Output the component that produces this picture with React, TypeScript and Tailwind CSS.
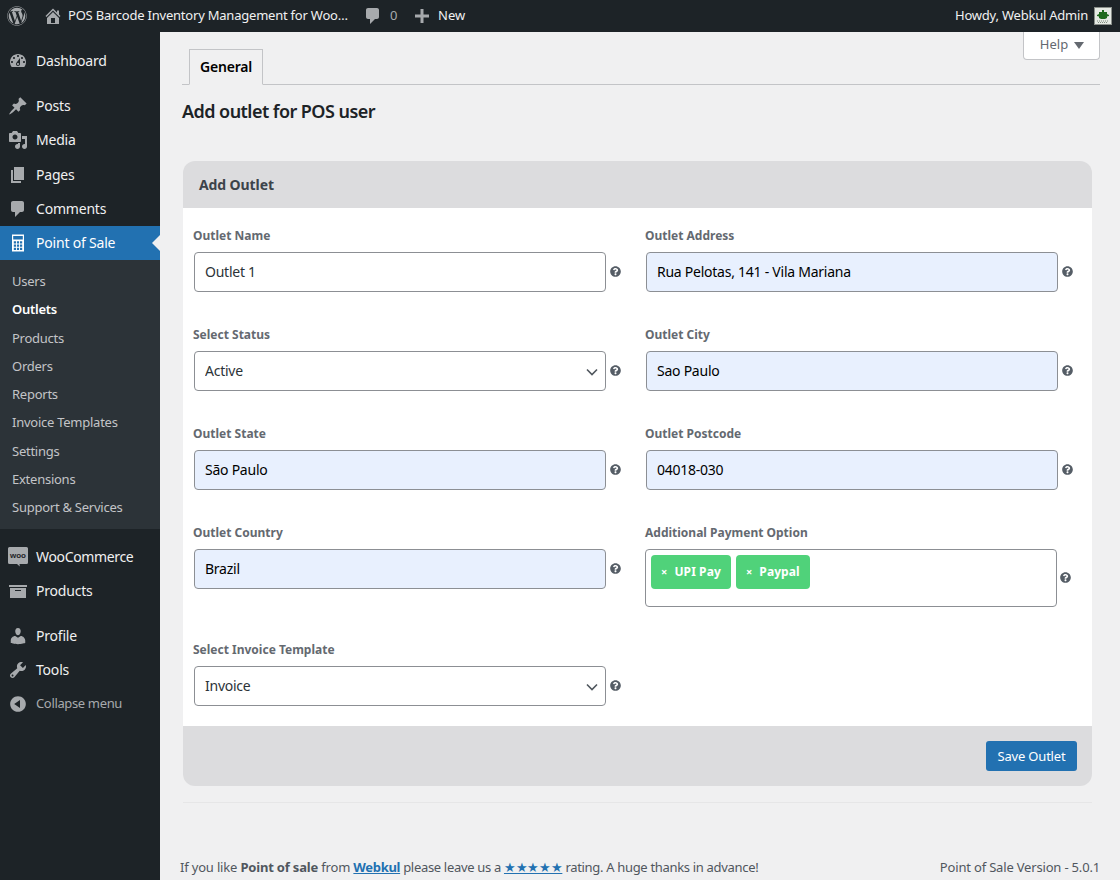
import React from "react";
import { FaWordpress, FaQuestionCircle } from "react-icons/fa";

const P: Record<string, string> = {
  dashboard: "M3.76 16h12.48c1.1-1.37 1.76-3.11 1.76-5 0-4.42-3.58-8-8-8s-8 3.58-8 8c0 1.89.66 3.63 1.76 5zM10 4c.55 0 1 .45 1 1s-.45 1-1 1-1-.45-1-1 .45-1 1-1zM6 6c.55 0 1 .45 1 1s-.45 1-1 1-1-.45-1-1 .45-1 1-1zm8 0c.55 0 1 .45 1 1s-.45 1-1 1-1-.45-1-1 .45-1 1-1zm-5.37 5.55L12 7v6c0 1.1-.9 2-2 2s-2-.9-2-2c0-.57.24-1.08.63-1.45zM4 10c.55 0 1 .45 1 1s-.45 1-1 1-1-.45-1-1 .45-1 1-1zm12 0c.55 0 1 .45 1 1s-.45 1-1 1-1-.45-1-1 .45-1 1-1zm-5 3c0-.55-.45-1-1-1s-1 .45-1 1 .45 1 1 1 1-.45 1-1z",
  post: "M10.44 3.02l1.82-1.82 6.36 6.35-1.83 1.82c-1.05-.68-2.48-.57-3.41.36l-.75.75c-.92.93-1.04 2.35-.35 3.41l-1.83 1.82-2.41-2.41-2.8 2.79c-.42.42-3.38 2.71-3.8 2.29s1.86-3.39 2.28-3.81l2.79-2.79L4.1 9.36l1.83-1.82c1.05.69 2.48.57 3.4-.36l.75-.75c.93-.92 1.05-2.35.36-3.41z",
  media: "M13 11V4c0-.55-.45-1-1-1h-1.67L9 1H5L3.67 3H2c-.55 0-1 .45-1 1v7c0 .55.45 1 1 1h10c.55 0 1-.45 1-1zM7 4.5c1.38 0 2.5 1.12 2.5 2.5S8.38 9.5 7 9.5 4.5 8.38 4.5 7 5.62 4.5 7 4.5zM14 6h5v10.5c0 1.38-1.12 2.5-2.5 2.5S14 17.88 14 16.5s1.12-2.5 2.5-2.5c.17 0 .34.02.5.05V9h-3V6zm-4 8.05V13h2v3.5c0 1.38-1.12 2.5-2.5 2.5S7 17.88 7 16.5 8.12 14 9.5 14c.17 0 .34.02.5.05z",
  page: "M6 15V2h10v13H6zm-1 1h8v2H3V5h2v11z",
  comment: "M5 2h9c1.1 0 2 .9 2 2v7c0 1.1-.9 2-2 2h-2l-5 5v-5H5c-1.1 0-2-.9-2-2V4c0-1.1.9-2 2-2z",
  archive: "M19 4v2H1V4h18zM2 7h16v10H2V7zm11 3V9H7v1h6z",
  user: "M10 9.25c-2.27 0-2.73-3.44-2.73-3.44C7 4.02 7.82 2 9.97 2c2.16 0 2.98 2.02 2.71 3.81 0 0-.41 3.44-2.68 3.44zm0 2.57L12.72 10c2.39 0 4.52 2.33 4.52 4.53v2.49s-3.65 1.13-7.24 1.13c-3.65 0-7.24-1.13-7.24-1.13v-2.49c0-2.25 1.94-4.48 4.47-4.48z",
  tools: "M16.68 9.77c-1.34 1.34-3.3 1.67-4.95.99l-5.41 6.52c-.99.99-2.59.99-3.58 0s-.99-2.59 0-3.57l6.52-5.42c-.68-1.65-.35-3.61.99-4.95 1.28-1.28 3.12-1.62 4.72-1.06l-2.89 2.89 2.82 2.82 2.86-2.87c.53 1.58.18 3.39-1.08 4.67zM3.81 16.21c.4.39 1.04.39 1.43 0 .4-.4.4-1.04 0-1.43-.39-.4-1.03-.4-1.43 0-.39.39-.39 1.03 0 1.43z",
  collapse: "M10 2.16c4.33 0 7.84 3.51 7.84 7.84s-3.51 7.84-7.84 7.84S2.16 14.33 2.16 10 5.71 2.16 10 2.16zm2 11.72V6.12L6.18 9.97z",
  home: "M16 8.5l1.53 1.53-1.06 1.06L10 4.62l-6.47 6.47-1.06-1.06L10 2.5l4 4v-2h2v4zm-6-2.46l6 5.99V18H4v-5.97zM12 17v-5H8v5h4z",
  plus: "M17 8.5v3h-5.5V17h-3v-5.5H3v-3h5.5V3h3v5.5H17z",
  calc: "M4 1.500h12V18.500H4V1.500zM5.200 3v3.500h9.600V3H5.200zM5.800 8.200v2.200h2.200V8.200H5.800zm3.100 0v2.200h2.200V8.200H8.900zm3.100 0v2.200h2.200V8.200H12zM5.800 11.500v2.200h2.200v-2.200H5.800zm3.100 0v2.200h2.200v-2.200H8.900zm3.100 0v2.200h2.200v-2.200H12zM5.800 14.800v2.200h2.200v-2.200H5.800zm3.100 0v2.200h2.200v-2.200H8.900zm3.100 0v2.200h2.200v-2.200H12z",
};

function Dash({ name, size = 20, className = "" }: { name: string; size?: number; className?: string }) {
  return (
    <svg viewBox="0 0 20 20" width={size} height={size} fill="currentColor" fillRule="evenodd" className={`shrink-0 ${className}`}>
      <path d={P[name]} />
    </svg>
  );
}

function WooIcon() {
  return (
    <svg viewBox="0 0 20 20" width="20" height="20">
      <path d="M1.500 0h17A1.500 1.500 0 0 1 20 1.500v14a1.500 1.500 0 0 1-1.500 1.500H11.500l.3 2.500L9 17H1.500A1.500 1.500 0 0 1 0 15.500v-14A1.500 1.500 0 0 1 1.500 0z" fill="#a7aaad" />
      <text x="10" y="11" textAnchor="middle" fontSize="8" fontWeight="700" fontFamily="Liberation Sans, sans-serif" fill="#1d2327">woo</text>
    </svg>
  );
}

function MenuItem({ icon, label, active, cls }: { icon: React.ReactNode; label: string; active?: boolean; cls?: string }) {
  return (
    <div className={`relative flex h-[34px] items-center text-sm ${cls ?? ""} ${active ? "bg-[#2271b1] text-white" : "text-[#f0f0f1]"}`}>
      <span className={`flex w-9 justify-center ${active ? "text-white" : "text-[#a7aaad]"}`}>{icon}</span>
      <span className={label === "WooCommerce" ? "tracking-[-0.35px]" : "tracking-[-0.2px]"}>{label}</span>
      {active && <span className="absolute right-0 top-[9px] border-y-8 border-r-8 border-y-transparent border-r-[#f0f0f1]" />}
    </div>
  );
}

const SUB = ["Users", "Outlets", "Products", "Orders", "Reports", "Invoice Templates", "Settings", "Extensions", "Support & Services"];

function Help({ cls = "ml-[4px]" }: { cls?: string }) {
  return <FaQuestionCircle className={`mb-[2px] shrink-0 text-[#555d66] ${cls}`} size={11} />;
}

function Label({ children }: { children: React.ReactNode }) {
  return <div className="h-5 text-xs font-bold leading-[22px] text-[#646970]">{children}</div>;
}

function Field({ label, value, filled, select }: { label: string; value: string; filled?: boolean; select?: boolean }) {
  return (
    <div>
      <Label>{label}</Label>
      <div className="mt-[7px] flex items-center pl-px">
        {select ? (
          <div className="relative w-[412px]">
            <select defaultValue={value} className="h-10 w-full appearance-none rounded border border-[#8c8f94] bg-white px-[10px] text-sm tracking-[-0.25px] text-[#2c3338]">
              <option>{value}</option>
            </select>
            <svg viewBox="0 0 12 8" width="12" height="8" className="pointer-events-none absolute right-[8px] top-[17px] text-[#50575e]" fill="none" stroke="currentColor" strokeWidth="1.600">
              <path d="M1 1.500l5 5 5-5" />
            </svg>
          </div>
        ) : (
          <input
            readOnly
            value={value}
            className={`h-10 w-[412px] rounded border border-[#8c8f94] px-[10px] pb-[2px] text-sm tracking-[-0.25px] ${filled ? "bg-[#e8f0fe] text-black" : "bg-white text-[#2c3338]"}`}
          />
        )}
        <Help />
      </div>
    </div>
  );
}

function Tag({ label }: { label: string }) {
  return (
    <span className="flex h-[34px] items-center gap-[7px] rounded bg-[#50d27a] px-[10px] text-xs font-bold tracking-[0.1px] text-white">
      <span className="text-[11px]">×</span>
      {label}
    </span>
  );
}

export default function App() {
  return (
    <div className="flex h-[880px] w-[1120px] flex-col overflow-hidden bg-[#f0f0f1] font-['Noto_Sans',sans-serif] text-[#3c434a]">
      <header className="flex h-8 shrink-0 items-center bg-[#1d2327] text-[13px] text-[#f0f0f1]">
        <FaWordpress size={20} className="ml-[7px] text-[#a7aaad]" />
        <Dash name="home" className="ml-[16px] text-[#a7aaad]" />
        <span className="ml-[5px] w-[281px] whitespace-nowrap tracking-[-0.22px]">POS Barcode Inventory Management for Woo…</span>
        <Dash name="comment" className="ml-[14px] text-[#a7aaad]" />
        <span className="ml-[7px] w-2 text-[#a7aaad]">0</span>
        <Dash name="plus" className="ml-[14px] text-[#a7aaad]" />
        <span className="ml-[6px]">New</span>
        <span className="ml-auto tracking-[-0.22px]">Howdy, Webkul Admin</span>
        <svg viewBox="0 0 18 18" width="18" height="18" className="ml-[6px] mr-[8px]">
          <rect width="18" height="18" fill="#e6eae4" />
          <rect x=".5" y=".5" width="17" height="17" fill="none" stroke="#8a8f8a" />
          <path d="M8 3h2v2h3v2l2 1v1l-2 .5V11l-2 1H7l-2-1V9.500L3 9V8l2-1V5h3z" fill="#1f6a1d" />
          <path d="M3 14h12M4 15.500h10" stroke="#7d8a7d" strokeWidth="1" strokeDasharray="1 1" />
        </svg>
      </header>

      <div className="flex min-h-0 flex-1">
        <aside className="w-40 shrink-0 bg-[#1d2327] pt-3">
          <MenuItem icon={<Dash name="dashboard" />} label="Dashboard" />
          <MenuItem icon={<Dash name="post" />} label="Posts" cls="mt-[11px]" />
          <MenuItem icon={<Dash name="media" />} label="Media" cls="mb-px" />
          <MenuItem icon={<Dash name="page" />} label="Pages" />
          <MenuItem icon={<Dash name="comment" />} label="Comments" />
          <MenuItem icon={<Dash name="calc" />} label="Point of Sale" active />
          <div className="flex h-[269px] flex-col justify-between bg-[#2c3338] pb-[9px] pt-[8px]">
            {SUB.map((s) => (
              <div key={s} className={`pl-3 text-[13px] leading-[26px] tracking-[-0.25px] ${s === "Outlets" ? "font-semibold text-white" : "text-[#c3c4c7]"}`}>
                {s}
              </div>
            ))}
          </div>
          <MenuItem icon={<WooIcon />} label="WooCommerce" cls="mt-[11px]" />
          <MenuItem icon={<Dash name="archive" />} label="Products" />
          <MenuItem icon={<Dash name="user" />} label="Profile" cls="mt-[11px]" />
          <MenuItem icon={<Dash name="tools" />} label="Tools" />
          <div className="flex h-[34px] items-center text-[13px] text-[#a7aaad]">
            <span className="flex w-9 justify-center"><Dash name="collapse" /></span>
            <span className="tracking-[-0.35px]">Collapse menu</span>
          </div>
        </aside>

        <main className="relative flex min-w-0 flex-1 flex-col pl-[22px] pr-5">
          <div className="absolute right-5 top-0 flex h-7 w-[77px] items-center justify-center gap-[6px] rounded-b border border-t-0 border-[#c3c4c7] bg-white pb-[2px] pl-px text-[13px] text-[#646970]">
            Help
            <span className="mt-px border-x-[5px] border-t-[7px] border-x-transparent border-t-[#646970]" />
          </div>

          <div className="flex h-[53px] items-end border-b border-[#c3c4c7] pl-[7px]">
            <div className="-mb-px flex h-9 w-[74px] items-center justify-center border border-[#c3c4c7] border-b-[#f0f0f1] bg-[#f0f0f1] text-sm font-semibold tracking-[-0.2px] text-black">
              General
            </div>
          </div>
          <h1 className="mt-[14px] h-6 text-lg font-semibold leading-6 tracking-[-0.55px] text-[#1d2327]">Add outlet for POS user</h1>

          <section className="ml-px mt-[38px] w-[909px]">
            <div className="flex h-[47px] items-center rounded-t-xl bg-[#dcdcde] pl-4 text-sm font-bold tracking-[-0.1px] text-[#3c434a]">Add Outlet</div>
            <div className="grid grid-cols-[452px_1fr] bg-white pb-5 pl-[10px] pt-[17px]">
              <div className="flex flex-col gap-8">
                <Field label="Outlet Name" value="Outlet 1" />
                <Field label="Select Status" value="Active" select />
                <Field label="Outlet State" value="São Paulo" filled />
                <Field label="Outlet Country" value="Brazil" filled />
                <div className="mt-[18px]">
                  <Field label="Select Invoice Template" value="Invoice" select />
                </div>
              </div>
              <div className="flex flex-col gap-8">
                <Field label="Outlet Address" value="Rua Pelotas, 141 - Vila Mariana" filled />
                <Field label="Outlet City" value="Sao Paulo" filled />
                <Field label="Outlet Postcode" value="04018-030" filled />
                <div>
                  <Label>Additional Payment Option</Label>
                  <div className="mt-[7px] flex items-center">
                    <div className="flex h-[58px] w-[412px] items-start gap-[5px] rounded border border-[#8c8f94] bg-white p-[5px]">
                      <Tag label="UPI Pay" />
                      <Tag label="Paypal" />
                    </div>
                    <Help cls="ml-[3px]" />
                  </div>
                </div>
              </div>
            </div>
            <div className="flex h-[60px] items-center justify-end rounded-b-xl bg-[#dcdcde] pr-[15px]">
              <button className="h-[30px] w-[91px] rounded-[3px] bg-[#2271b1] pt-[2px] text-[13px] tracking-[-0.2px] text-white">Save Outlet</button>
            </div>
          </section>
          <div className="ml-px mt-4 h-px w-[909px] bg-[#e6e6e7]" />

          <footer className="-ml-[2px] mt-auto flex h-[26px] items-start justify-between text-[13px] leading-[26px] text-[#50575e]">
            <span className="tracking-[-0.32px]">
              <span className="tracking-[-0.18px]">If you like <b>Point of sale</b> from </span><a className="font-bold text-[#2271b1] underline">Webkul</a> please leave us a <a className="text-[#2271b1] underline">★★★★★</a> rating. A huge thanks in advance!
            </span>
            <span className="tracking-[-0.18px]">Point of Sale Version - 5.0.1</span>
          </footer>
        </main>
      </div>
    </div>
  );
}
